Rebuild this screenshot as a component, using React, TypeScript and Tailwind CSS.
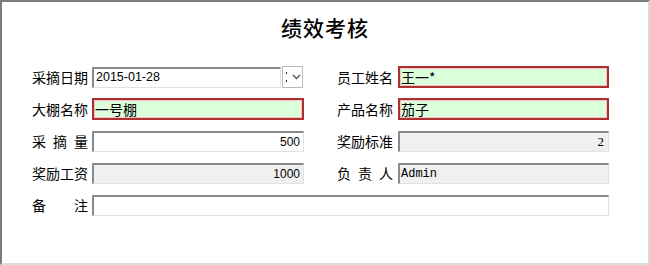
import React from "react";

const cjk = { fontFamily: '"Noto Sans CJK SC", "Noto Sans", sans-serif' };

function Label({ chars }: { chars: string[] }) {
  return (
    <div
      className="flex w-[56px] justify-between text-[14px] leading-none text-black"
      style={cjk}
    >
      {chars.map((c, i) => (
        <span key={i}>{c}</span>
      ))}
    </div>
  );
}

const sunken =
  "border-t-2 border-l-2 border-r border-b border-t-[#8a8a8a] border-l-[#8a8a8a] border-r-[#e2e2e2] border-b-[#e2e2e2]";

function GreenInput({ value, w }: { value: string; w: string }) {
  return (
    <div
      className={`${w} h-[22px] flex items-center border-2 border-[#b0302f] bg-[#dcffdc] pl-[1px] text-[14px] leading-none text-black shadow-[inset_0_0_0_1px_#f2c2c2]`}
      style={cjk}
    >
      {value}
    </div>
  );
}

export default function App() {
  return (
    <div className="w-[650px] h-[265px] bg-white border-t-2 border-l-2 border-t-[#7c7c7c] border-l-[#7c7c7c] border-r-2 border-b-2 border-r-[#dcdcdc] border-b-[#dcdcdc] flex flex-col">
      <div className="h-[64px] flex items-start justify-center pt-[15px]">
        <span className="text-[21px] font-medium leading-none text-black tracking-[1px]" style={cjk}>
          绩效考核
        </span>
      </div>
      <div className="flex flex-col gap-[10px] pl-[30px]">
        {/* Row 1 */}
        <div className="flex h-[22px] items-center">
          <Label chars={["采摘日期"]} />
          <div className="ml-[4px] flex w-[212px] items-center">
            <div
              className={`h-[21px] w-[189px] ${sunken} flex items-center pl-[2px] text-[12.5px] text-black bg-white`}
              style={{ fontFamily: '"Liberation Sans", Arial, sans-serif' }}
            >
              2015-01-28
            </div>
            <div className="ml-[1px] h-[22px] w-[21px] border border-[#b8b8b8] bg-white flex items-center">
              <div className="ml-[3px] flex h-[10px] flex-col justify-between">
                <div className="h-[2px] w-[1px] bg-[#222]"></div>
                <div className="h-[2px] w-[1px] bg-[#222]"></div>
              </div>
              <svg width="9" height="6" viewBox="0 0 9 6" className="ml-[5px]">
                <path d="M1 1 L4.5 4.5 L8 1" stroke="#555" strokeWidth="1.4" fill="none" />
              </svg>
            </div>
          </div>
          <div className="ml-[33px]">
            <Label chars={["员工姓名"]} />
          </div>
          <div className="ml-[5px]">
            <GreenInput value="王一*" w="w-[211px]" />
          </div>
        </div>
        {/* Row 2 */}
        <div className="flex h-[22px] items-center">
          <Label chars={["大棚名称"]} />
          <div className="ml-[4px]">
            <GreenInput value="一号棚" w="w-[212px]" />
          </div>
          <div className="ml-[33px]">
            <Label chars={["产品名称"]} />
          </div>
          <div className="ml-[5px]">
            <GreenInput value="茄子" w="w-[211px]" />
          </div>
        </div>
        {/* Row 3 */}
        <div className="flex h-[22px] items-center">
          <Label chars={["采", "摘", "量"]} />
          <div
            className={`ml-[4px] h-[21px] w-[212px] ${sunken} bg-white flex items-center justify-end pr-[3px] text-[12px] text-black`}
            style={{ fontFamily: '"Liberation Sans", Arial, sans-serif' }}
          >
            500
          </div>
          <div className="ml-[33px]">
            <Label chars={["奖励标准"]} />
          </div>
          <div
            className={`ml-[5px] h-[21px] w-[211px] ${sunken} bg-[#f0f0f0] flex items-center justify-end pr-[4px] text-[13px] text-black`}
            style={{ fontFamily: '"Liberation Serif", "Times New Roman", serif' }}
          >
            2
          </div>
        </div>
        {/* Row 4 */}
        <div className="flex h-[22px] items-center">
          <Label chars={["奖励工资"]} />
          <div
            className={`ml-[4px] h-[21px] w-[212px] ${sunken} bg-[#f0f0f0] flex items-center justify-end pr-[3px] text-[12px] text-black`}
            style={{ fontFamily: '"Liberation Sans", Arial, sans-serif' }}
          >
            1000
          </div>
          <div className="ml-[33px]">
            <Label chars={["负", "责", "人"]} />
          </div>
          <div
            className={`ml-[5px] h-[21px] w-[211px] ${sunken} bg-[#f0f0f0] flex items-center pl-[1px] text-[12px] text-black`}
            style={{ fontFamily: '"Liberation Mono", "Courier New", monospace' }}
          >
            Admin
          </div>
        </div>
        {/* Row 5 */}
        <div className="flex h-[22px] items-center">
          <Label chars={["备", "注"]} />
          <div className={`ml-[4px] h-[21px] w-[517px] ${sunken} bg-white`}></div>
        </div>
      </div>
    </div>
  );
}
